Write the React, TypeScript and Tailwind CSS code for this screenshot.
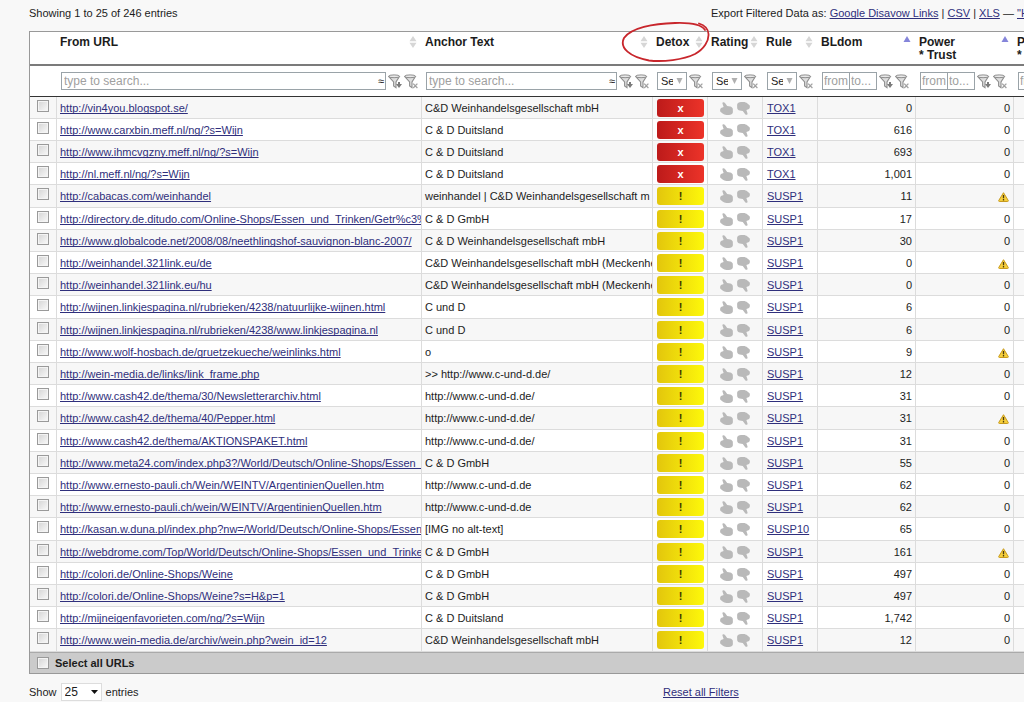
import React from 'react';

interface LinkRow {
  url: string;
  anchor: string;
  rule: string;
  bldom: string;
  warn?: boolean;
}

const WEIN = 'C&D Weinhandelsgesellschaft mbH';

const rows: LinkRow[] = [
  { url: 'http://vin4you.blogspot.se/', anchor: WEIN, rule: 'TOX1', bldom: '0' },
  { url: 'http://www.carxbin.meff.nl/ng/?s=Wijn', anchor: 'C & D Duitsland', rule: 'TOX1', bldom: '616' },
  { url: 'http://www.ihmcvgzny.meff.nl/ng/?s=Wijn', anchor: 'C & D Duitsland', rule: 'TOX1', bldom: '693' },
  { url: 'http://nl.meff.nl/ng/?s=Wijn', anchor: 'C & D Duitsland', rule: 'TOX1', bldom: '1,001' },
  { url: 'http://cabacas.com/weinhandel', anchor: 'weinhandel | C&D Weinhandelsgesellschaft m', rule: 'SUSP1', bldom: '11', warn: true },
  { url: 'http://directory.de.ditudo.com/Online-Shops/Essen_und_Trinken/Getr%c3%', anchor: 'C & D GmbH', rule: 'SUSP1', bldom: '17' },
  { url: 'http://www.globalcode.net/2008/08/neethlingshof-sauvignon-blanc-2007/', anchor: 'C & D Weinhandelsgesellschaft mbH', rule: 'SUSP1', bldom: '30' },
  { url: 'http://weinhandel.321link.eu/de', anchor: WEIN + ' (Meckenhe', rule: 'SUSP1', bldom: '0', warn: true },
  { url: 'http://weinhandel.321link.eu/hu', anchor: WEIN + ' (Meckenhe', rule: 'SUSP1', bldom: '0' },
  { url: 'http://wijnen.linkjespagina.nl/rubrieken/4238/natuurlijke-wijnen.html', anchor: 'C und D', rule: 'SUSP1', bldom: '6' },
  { url: 'http://wijnen.linkjespagina.nl/rubrieken/4238/www.linkjespagina.nl', anchor: 'C und D', rule: 'SUSP1', bldom: '6' },
  { url: 'http://www.wolf-hosbach.de/gruetzekueche/weinlinks.html', anchor: 'o', rule: 'SUSP1', bldom: '9', warn: true },
  { url: 'http://wein-media.de/links/link_frame.php', anchor: '>> http://www.c-und-d.de/', rule: 'SUSP1', bldom: '12' },
  { url: 'http://www.cash42.de/thema/30/Newsletterarchiv.html', anchor: 'http://www.c-und-d.de/', rule: 'SUSP1', bldom: '31' },
  { url: 'http://www.cash42.de/thema/40/Pepper.html', anchor: 'http://www.c-und-d.de/', rule: 'SUSP1', bldom: '31', warn: true },
  { url: 'http://www.cash42.de/thema/AKTIONSPAKET.html', anchor: 'http://www.c-und-d.de/', rule: 'SUSP1', bldom: '31' },
  { url: 'http://www.meta24.com/index.php3?/World/Deutsch/Online-Shops/Essen_', anchor: 'C & D GmbH', rule: 'SUSP1', bldom: '55' },
  { url: 'http://www.ernesto-pauli.ch/Wein/WEINTV/ArgentinienQuellen.htm', anchor: 'http://www.c-und-d.de', rule: 'SUSP1', bldom: '62' },
  { url: 'http://www.ernesto-pauli.ch/wein/WEINTV/ArgentinienQuellen.htm', anchor: 'http://www.c-und-d.de', rule: 'SUSP1', bldom: '62' },
  { url: 'http://kasan.w.duna.pl/index.php?nw=/World/Deutsch/Online-Shops/Essen_', anchor: '[IMG no alt-text]', rule: 'SUSP10', bldom: '65' },
  { url: 'http://webdrome.com/Top/World/Deutsch/Online-Shops/Essen_und_Trinke', anchor: 'C & D GmbH', rule: 'SUSP1', bldom: '161', warn: true },
  { url: 'http://colori.de/Online-Shops/Weine', anchor: 'C & D GmbH', rule: 'SUSP1', bldom: '497' },
  { url: 'http://colori.de/Online-Shops/Weine?s=H&p=1', anchor: 'C & D GmbH', rule: 'SUSP1', bldom: '497' },
  { url: 'http://mijneigenfavorieten.com/ng/?s=Wijn', anchor: 'C & D Duitsland', rule: 'SUSP1', bldom: '1,742' },
  { url: 'http://www.wein-media.de/archiv/wein.php?wein_id=12', anchor: WEIN, rule: 'SUSP1', bldom: '12' },
];

const linkClass = 'text-[#2f2f7c] underline [text-decoration-skip-ink:none]';
const boxClass = 'h-[18px] border border-[#9aa3a8] bg-white';
const cellClass = 'border-r border-b border-[#dcdcdc] overflow-hidden whitespace-nowrap pr-[3px]';

function FunnelIcon({ kind }: { kind: 'add' | 'clear' }) {
  return (
    <svg width="14" height="15" viewBox="0 0 14 15" fill="none" className="block">
      <path d="M0.8 2.6 L5.6 8 V12 L8 13.6 V8 L11.4 2.6 Z" fill="#dedede" stroke="#8f8f8f" strokeWidth="1.1" />
      <ellipse cx="6.1" cy="2.3" rx="5.4" ry="1.4" fill="#e9e9e9" stroke="#8f8f8f" strokeWidth="1" />
      {kind === 'add' ? (
        <path d="M10 8 V10 H8 L11 14 L14 10 H12 V8 Z" fill="#7b7b7b" />
      ) : (
        <path d="M9.2 9.6 L13.4 14 M13.4 9.6 L9.2 14" stroke="#a2a2a2" strokeWidth="1.3" />
      )}
    </svg>
  );
}

function FilterButton({ kind }: { kind: 'add' | 'clear' }) {
  return (
    <button type="button" aria-label={kind === 'add' ? 'Add filter' : 'Clear filter'} className="shrink-0">
      <FunnelIcon kind={kind} />
    </button>
  );
}

function SortIcon() {
  return (
    <svg width="8" height="12" viewBox="0 0 8 12" className="block shrink-0">
      <path d="M4 0 L7.5 5.3 H0.5 Z M4 12 L7.5 6.7 H0.5 Z" fill="#d6d6d6" />
    </svg>
  );
}

function SortedIcon() {
  return (
    <svg width="8" height="6" viewBox="0 0 8 6" className="block shrink-0">
      <path d="M4 0 L7.5 6 H0.5 Z" fill="#8585da" />
    </svg>
  );
}

function ThumbIcon({ down }: { down?: boolean }) {
  return (
    <svg width="13" height="13" viewBox="0 0 13 13" className={down ? 'rotate-180' : ''}>
      <path
        d="M2.4 1.2 C2.4 -0.1 4.2 -0.2 5 1 L7.2 4 L10.2 4.4 C11.6 4.8 12.6 5.6 12.8 6.8 L12.9 10.2 C12.6 12 11 13 9 13 H6.6 C5 13 3.6 12.4 2.6 11.6 L0.4 9.8 C-0.1 8.4 0 6.8 1 6 L3.6 5 Z"
        fill="#b9b9b9"
      />
    </svg>
  );
}

function WarningIcon() {
  return (
    <svg width="11" height="10" viewBox="0 0 11 10" role="img" aria-label="Warning" className="mr-px inline-block">
      <path d="M5.5 0.7 L10.3 8.6 Q10.4 9.5 9.6 9.5 H1.4 Q0.6 9.5 0.7 8.6 Z" fill="#f6cf3c" stroke="#c79a1e" strokeWidth="1" />
      <path d="M5.5 3 V6.2 M5.5 7.1 V8.4" stroke="#4a3a10" strokeWidth="1.3" />
    </svg>
  );
}

function TextFilter({ label }: { label: string }) {
  return (
    <div className="flex items-center gap-[2px] pl-px">
      <div className={`${boxClass} flex min-w-0 flex-1 items-center`}>
        <input
          type="text"
          aria-label={label}
          placeholder="type to search..."
          className="min-w-0 flex-1 px-[2px] text-[12px] outline-none placeholder:text-[#a0a0a0]"
        />
        <span className="pr-px text-[11px]">≈</span>
      </div>
      <FilterButton kind="add" />
      <FilterButton kind="clear" />
    </div>
  );
}

function SelectFilter({ label }: { label: string }) {
  return (
    <div className="flex items-center gap-[2px] pl-px">
      <div className="relative">
        <select aria-label={label} className={`${boxClass} block w-[30px] appearance-none pr-[13px] pl-[3px] text-[11px]`}>
          <option>Select</option>
        </select>
        <svg width="7" height="6" viewBox="0 0 7 6" className="pointer-events-none absolute top-[6px] right-1">
          <path d="M0.5 0 H6.5 L3.5 6 Z" fill="#b0b0b0" />
        </svg>
      </div>
      <FilterButton kind="clear" />
    </div>
  );
}

function RangeFilter({ label }: { label: string }) {
  const inputClass = `${boxClass} px-px text-[12px] placeholder:text-[#a0a0a0]`;
  return (
    <div className="flex items-center gap-[2px] pl-px">
      <div className="flex">
        <input type="text" aria-label={`${label} from`} placeholder="from" className={`${inputClass} w-[28px]`} />
        <input type="text" aria-label={`${label} to`} placeholder="to..." className={`${inputClass} w-[27px] border-l-0`} />
      </div>
      <FilterButton kind="add" />
      <FilterButton kind="clear" />
    </div>
  );
}

// hand drawn ring around the Detox heading
function DetoxMarker() {
  return (
    <svg width="90" height="42" viewBox="0 0 90 42" fill="none" className="pointer-events-none absolute -top-[11px] -left-[32px]">
      <path
        d="M84 9 C80 3 68 1.5 54 2 C32 2.5 10 7 3 17 C-2 27 9 36 28 39.5 C42 41 62 39 74 33 C83 28 88 20 87.5 13 C87 7 83 4 78 2.5"
        stroke="#c8262c"
        strokeWidth="1.8"
        strokeLinecap="round"
      />
    </svg>
  );
}

interface HeaderCellProps {
  children?: React.ReactNode;
  sorted?: boolean;
  marked?: boolean;
}

function HeaderCell({ children, sorted, marked }: HeaderCellProps) {
  return (
    <th className="relative h-[34px] border-b-2 border-[#7b7b7b] pt-1 pr-[5px] pl-[3px] text-left align-top text-[12px] leading-[13px] font-bold whitespace-nowrap">
      <div className="flex justify-between">
        <span>{children}</span>
        {children && (sorted ? <SortedIcon /> : <SortIcon />)}
      </div>
      {marked && <DetoxMarker />}
    </th>
  );
}

function CheckBox({ label }: { label: string }) {
  return (
    <input
      type="checkbox"
      aria-label={label}
      className="block h-3 w-3 appearance-none border border-[#9a9a9a] bg-linear-to-br from-[#d4d4d4] to-[#fafafa] shadow-[inset_0_0_0_1px_#f4f4f4]"
    />
  );
}

export default function App() {
  return (
    <main className="min-h-screen overflow-hidden bg-[#f8f8f8] pl-[29px] font-['Liberation_Sans',Arial,sans-serif] text-[11px] leading-[14px] text-[#1c1c1c]">
      <div className="flex h-[31px] pt-[6px] whitespace-nowrap">
        <div className="flex-1">Showing 1 to 25 of 246 entries</div>
        <div className="w-[313px] overflow-hidden">
          Export Filtered Data as:{' '}
          <a href="#disavow" className={linkClass}>Google Disavow Links</a> | <a href="#csv" className={linkClass}>CSV</a> |{' '}
          <a href="#xls" className={linkClass}>XLS</a> — <a href="#hi" className={linkClass}>"Hi</a>
        </div>
      </div>

      <table className="w-[calc(100%+89px)] table-fixed border-separate border-spacing-0 border border-[#999] bg-white">
        <colgroup>
          <col className="w-[27px]" />
          <col />
          <col className="w-[231px]" />
          <col className="w-[55px]" />
          <col className="w-[55px]" />
          <col className="w-[55px]" />
          <col className="w-[98px]" />
          <col className="w-[98px]" />
          <col className="w-[98px]" />
        </colgroup>
        <thead>
          <tr>
            <HeaderCell />
            <HeaderCell>From URL</HeaderCell>
            <HeaderCell>Anchor Text</HeaderCell>
            <HeaderCell marked>Detox</HeaderCell>
            <HeaderCell>Rating</HeaderCell>
            <HeaderCell>Rule</HeaderCell>
            <HeaderCell sorted>BLdom</HeaderCell>
            <HeaderCell sorted>Power<br />* Trust</HeaderCell>
            <HeaderCell sorted>Power<br />* Trust</HeaderCell>
          </tr>
          <tr className="[&>td]:h-[31px] [&>td]:border-b [&>td]:border-[#333] [&>td]:pr-1 [&>td]:pl-[3px]">
            <td />
            <td><TextFilter label="From URL" /></td>
            <td><TextFilter label="Anchor Text" /></td>
            <td><SelectFilter label="Detox" /></td>
            <td><SelectFilter label="Rating" /></td>
            <td><SelectFilter label="Rule" /></td>
            <td><RangeFilter label="BLdom" /></td>
            <td><RangeFilter label="Power Trust" /></td>
            <td><RangeFilter label="Power" /></td>
          </tr>
        </thead>
        <tbody className="[&>tr:nth-child(5n)>td]:h-[23px] [&>tr>td]:h-[22px]">
          {rows.map((row, i) => {
            const toxic = row.rule.startsWith('TOX');
            return (
              <tr key={i} className="odd:bg-[#f7f7f7] even:bg-white">
                <td className={`${cellClass} pb-1 pl-[7px]`}>
                  <CheckBox label={`Select ${row.url}`} />
                </td>
                <td className={`${cellClass} pl-[3px]`}>
                  <a href={row.url} className={linkClass}>{row.url}</a>
                </td>
                <td className={`${cellClass} pl-[3px]`}>{row.anchor}</td>
                <td className={`${cellClass} pl-1`}>
                  <div
                    className={`h-[18px] rounded-[3px] text-center leading-[18px] font-bold ${
                      toxic
                        ? 'bg-linear-to-r from-[#bd1a1a] to-[#ec3329] text-white'
                        : 'bg-linear-to-r from-[#e3c60c] to-[#fdf80a] text-[#3b3500]'
                    }`}
                  >
                    {toxic ? 'x' : '!'}
                  </div>
                </td>
                <td className={`${cellClass} pl-[3px]`}>
                  <div className="flex justify-center gap-1 pt-px">
                    <button type="button" aria-label="Rate up"><ThumbIcon /></button>
                    <button type="button" aria-label="Rate down"><ThumbIcon down /></button>
                  </div>
                </td>
                <td className={`${cellClass} pl-1`}>
                  <a href="#rule" className={linkClass}>{row.rule}</a>
                </td>
                <td className={`${cellClass} text-right`}>{row.bldom}</td>
                <td className={`${cellClass} text-right`}>{row.warn ? <WarningIcon /> : '0'}</td>
                <td className={cellClass} />
              </tr>
            );
          })}
        </tbody>
        <tfoot>
          <tr className="bg-[#cbcbcb]">
            <td colSpan={9} className="h-[21px] border-t border-[#aaa] pb-px pl-[7px]">
              <label className="flex items-center gap-[6px] font-bold">
                <CheckBox label="Select all URLs" />
                Select all URLs
              </label>
            </td>
          </tr>
        </tfoot>
      </table>

      <div className="grid grid-cols-[634px_1fr] items-center pt-[9px]">
        <label className="flex items-center gap-1">
          Show
          <span className="relative">
            <select defaultValue="25" className="block h-[18px] w-[41px] appearance-none border border-[#ddd] bg-white pl-[3px] text-[12px]">
              <option>25</option>
              <option>50</option>
              <option>100</option>
            </select>
            <svg width="7" height="4" viewBox="0 0 7 4" className="pointer-events-none absolute top-[7px] right-1">
              <path d="M0 0 H7 L3.5 4 Z" fill="#111" />
            </svg>
          </span>
          entries
        </label>
        <div>
          <a href="#reset" className={linkClass}>Reset all Filters</a>
        </div>
      </div>
    </main>
  );
}
